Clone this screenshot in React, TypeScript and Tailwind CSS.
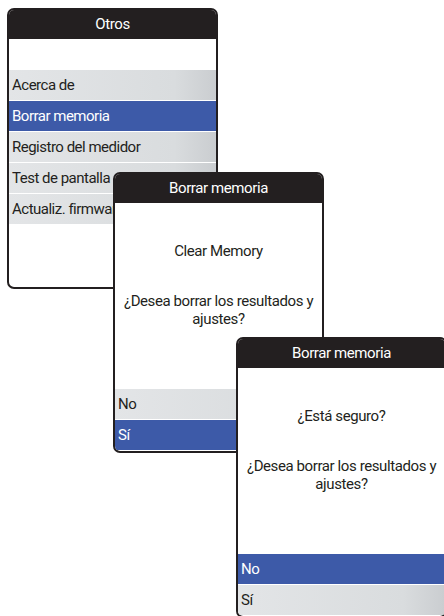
import React from 'react';

const font = { fontFamily: 'Roboto, "Liberation Sans", Arial, sans-serif' };

const grayRow = 'bg-gradient-to-r from-[#e3e5e7] via-[#d9dcde] via-80% to-[#cacdd0] text-[#231f20]';
const blueRow = 'bg-[#3d5aa8] text-white';

interface ScreenProps {
  title: string;
  className: string;
  children: React.ReactNode;
}

const Screen: React.FC<ScreenProps> = ({ title, className, children }) => (
  <div
    className={`absolute flex flex-col w-[211px] h-[281px] bg-white border-2 border-[#231f20] rounded-[7px] overflow-hidden ${className}`}
  >
    <div className="h-[29px] shrink-0 bg-[#231f20] text-white flex items-center justify-center text-[15px] tracking-[-0.4px]">
      {title}
    </div>
    {children}
  </div>
);

const Row: React.FC<{ label: string; selected?: boolean; last?: boolean }> = ({ label, selected, last }) => (
  <div
    className={`h-[30px] shrink-0 flex items-center pl-[3px] text-[15px] tracking-[-0.5px] ${selected ? blueRow : grayRow} ${last ? '' : 'mb-px'}`}
  >
    {label}
  </div>
);

const Confirm: React.FC<{ title: string; heading: string; selected: 'no' | 'si'; className: string }> = ({
  title,
  heading,
  selected,
  className,
}) => (
  <Screen title={title} className={className}>
    <div className="flex-1 flex flex-col items-center text-center text-[15px] tracking-[-0.4px] leading-[18px] text-[#231f20] pt-[39px]">
      <p>{heading}</p>
      <p className="mt-[32px] whitespace-nowrap">
        ¿Desea borrar los resultados y
        <br />
        ajustes?
      </p>
    </div>
    <div className="pb-px">
      <Row label="No" selected={selected === 'no'} />
      <Row label="Sí" selected={selected === 'si'} last />
    </div>
  </Screen>
);

export default function App() {
  return (
    <div className="relative w-[444px] h-[616px] overflow-hidden bg-white" style={font}>
      <Screen title="Otros" className="left-[7px] top-[8px]">
        <div className="h-[31px] shrink-0" />
        <Row label="Acerca de" />
        <Row label="Borrar memoria" selected />
        <Row label="Registro del medidor" />
        <Row label="Test de pantalla" />
        <Row label="Actualiz. firmware" last />
      </Screen>

      <Confirm title="Borrar memoria" heading="Clear Memory" selected="si" className="left-[113px] top-[172px]" />

      <Confirm title="Borrar memoria" heading="¿Está seguro?" selected="no" className="left-[236px] top-[337px]" />
    </div>
  );
}
